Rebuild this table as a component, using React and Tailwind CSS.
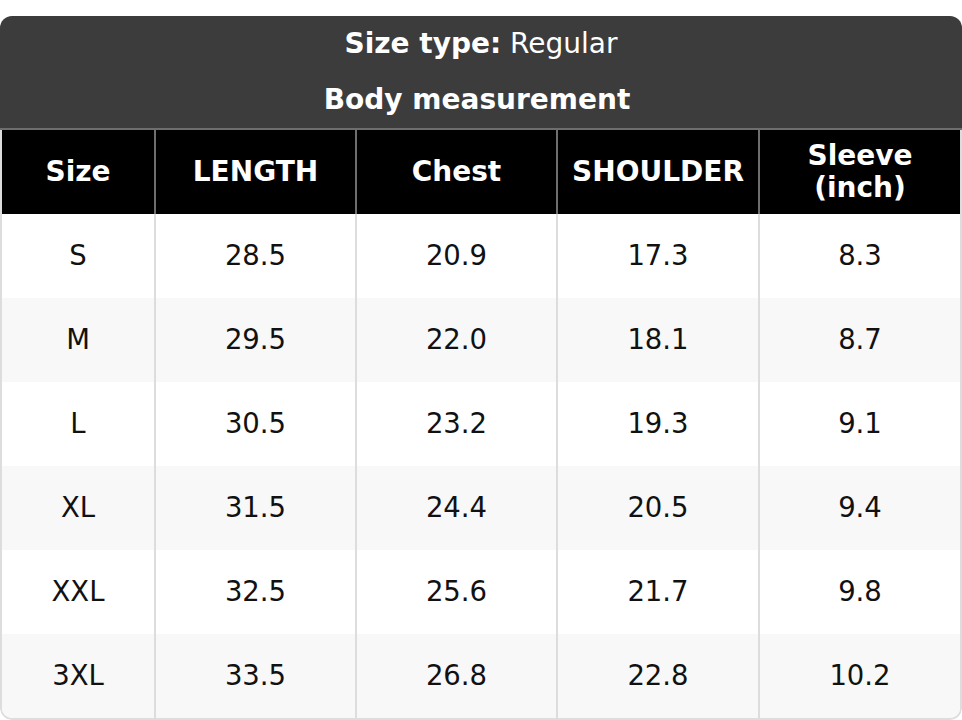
import React from "react";

const rows = [
  ["S", "28.5", "20.9", "17.3", "8.3"],
  ["M", "29.5", "22.0", "18.1", "8.7"],
  ["L", "30.5", "23.2", "19.3", "9.1"],
  ["XL", "31.5", "24.4", "20.5", "9.4"],
  ["XXL", "32.5", "25.6", "21.7", "9.8"],
  ["3XL", "33.5", "26.8", "22.8", "10.2"],
];

const cols = "grid grid-cols-[154px_201px_201px_202px_1fr]";

export default function App() {
  return (
    <div className="w-[962px] h-[720px] bg-white pt-[16px]" style={{ fontFamily: '"DejaVu Sans", sans-serif' }}>
      <div className="rounded-[12px] overflow-hidden">
        <div className="bg-[#3c3c3c] text-white text-[28px] text-center border-b-2 border-[#6e6e6e]">
          <div className="h-[56px] flex items-center justify-center">
            <span className="font-bold">Size type:</span>&nbsp;<span>Regular</span>
          </div>
          <div className="h-[56px] flex items-center justify-center font-bold pr-[8px]">Body measurement</div>
        </div>
        <div className="border-x-2 border-b-2 border-[#dddddd] rounded-b-[12px] overflow-hidden">
          <div className="bg-black -mx-[2px] px-[2px]">
            <div className={`${cols} text-white font-bold text-[28px] h-[84px]`}>
              {["Size", "LENGTH", "Chest", "SHOULDER", "Sleeve\n(inch)"].map((h, i) => (
                <div
                  key={i}
                  className={`flex items-center justify-center text-center leading-[32px] whitespace-pre-line ${i < 4 ? "border-r-2 border-[#6e6e6e]" : ""}`}
                >
                  {h}
                </div>
              ))}
            </div>
          </div>
          {rows.map((r, ri) => (
            <div key={ri} className={`${cols} h-[84px] text-[27.5px] text-[#111] ${ri % 2 === 1 ? "bg-[#f8f8f8]" : "bg-white"}`}>
              {r.map((c, ci) => (
                <div
                  key={ci}
                  className={`flex items-center justify-center ${ci < 4 ? "border-r-2 border-[#dddddd]" : ""}`}
                >
                  {c}
                </div>
              ))}
            </div>
          ))}
        </div>
      </div>
    </div>
  );
}
